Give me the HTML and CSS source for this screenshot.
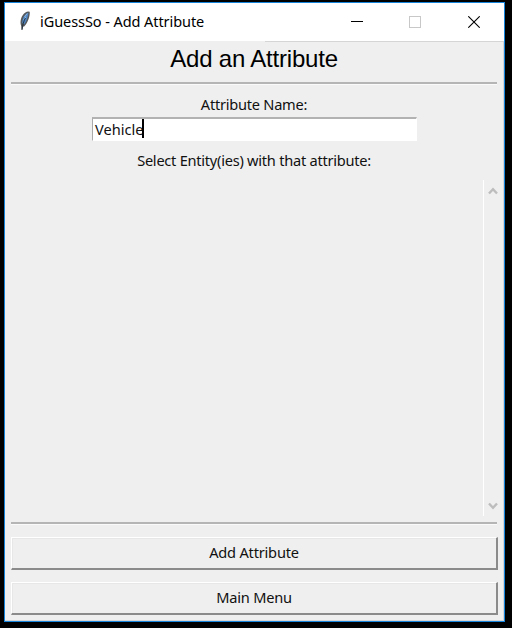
FILE: index.html
```html
<!DOCTYPE html>
<html lang="en">
<head>
<meta charset="utf-8">
<title>iGuessSo - Add Attribute</title>
<link rel="stylesheet" href="styles.css">
</head>
<body>
<main class="window">
  <header class="titlebar">
    <svg class="feather" width="12" height="20" viewBox="0 0 14 20" preserveAspectRatio="none"><path d="M2.500 15C0.500 10 3 4 7.500 1.500Q10 0 12.500 .8C13 5 10.500 12 6 15.500L4.500 15.800L4 19H3Z" fill="#56595c"/><path d="M3.800 12C4 7 6.500 3 11 1.800C10.500 6 9 10 6 13.500Z" fill="#4f87c6"/><path d="M6.500 6L9.500 2.500M5.500 9L8 6" stroke="#92b8df" stroke-width="1"/><path d="M3.500 18.500C4.300 14 5.500 10 7.500 7" fill="none" stroke="#1b2935" stroke-width="1"/></svg>
    <span class="caption">iGuessSo - Add Attribute</span>
    <div class="controls">
      <svg width="12" height="12" viewBox="0 0 12 12"><path d="M0 5.500H12" stroke="#000"/></svg>
      <svg width="12" height="12" viewBox="0 0 12 12"><rect x=".5" y=".5" width="11" height="11" fill="none" stroke="#c8c8c8"/></svg>
      <svg width="12" height="12" viewBox="0 0 12 12"><path d="M.3 .3L11.700 11.700M11.700 .3L.3 11.700" stroke="#000" stroke-width="1.100"/></svg>
    </div>
  </header>
  <section class="content">
    <h1>Add an Attribute</h1>
    <div class="rule"></div>
    <label class="name-label">Attribute Name:</label>
    <div class="entry"><span class="value">Vehicle</span><i class="caret"></i></div>
    <p class="select-label">Select Entity(ies) with that attribute:</p>
    <div class="list">
      <div class="scrollbar">
        <svg width="10" height="8" viewBox="0 0 10 8"><path d="M1 6.500L5 2.200L9 6.500" fill="none" stroke="#bdbdbd" stroke-width="2.400"/></svg>
        <svg width="10" height="8" viewBox="0 0 10 8"><path d="M1 1.500L5 5.800L9 1.500" fill="none" stroke="#bdbdbd" stroke-width="2.400"/></svg>
      </div>
    </div>
    <div class="rule"></div>
    <button class="action"><span>Add Attribute</span></button>
    <button class="action"><span>Main Menu</span></button>
  </section>
</main>
</body>
</html>
```
FILE: styles.css
```css
* { box-sizing: border-box; }
body { margin: 0; padding: 2px 0 0 4px; height: 628px; background: #000; overflow: hidden; color: #111; font: 14.600px/20px "Noto Sans", sans-serif; letter-spacing: -.25px; }
.window { width: 501px; height: 620px; border: 1px solid #1784dc; background: #efefef; display: flex; flex-direction: column; }
.titlebar { height: 38px; flex: none; background: #fff; display: flex; align-items: flex-start; padding-left: 14px; }
.feather { margin-top: 8px; }
.caption { margin: 8px 0 0 9px; font-size: 14.500px; line-height: 21px; color: #000; white-space: nowrap; letter-spacing: -.07px; }
.controls { display: flex; gap: 47px; margin: 13px 24px 0 auto; }
.controls svg { display: block; }
.controls svg:first-child { margin-right: -1px; }
.content { flex: 1; display: flex; flex-direction: column; padding: 0 6px; border-right: 1px solid #d5d5d5; border-bottom: 1px solid #d5d5d5; background: linear-gradient(#d5d5d5, #d5d5d5) 260px 0 / 240px 1px no-repeat; }
h1 { margin: 3px 0 0; height: 38px; font: 24px/29px "Liberation Sans", sans-serif; text-align: center; color: #000; letter-spacing: -.2px; }
.rule { width: 486px; height: 3px; flex: none; border-top: 2px solid #b5b5b5; border-bottom: 1px solid #fafafa; }
.name-label { height: 21px; margin-top: 9px; text-align: center; }
.entry { width: 325px; height: 24px; margin: 2px 0 0 81px; background: #fff; border: 1px solid #aaa; border-right-color: #fff; border-bottom-color: #fff; border-top-width: 2px; border-top-color: #b2b2b2; display: flex; align-items: flex-start; padding-left: 2px; }
.value { letter-spacing: 0; }
.caret { width: 2px; height: 19px; background: #000; margin-left: -1px; }
.select-label { margin: 9px 0 0; text-align: center; letter-spacing: -.25px; }
.list { height: 336px; margin-top: 10px; display: flex; justify-content: flex-end; }
.scrollbar { width: 16px; border-left: 1px solid #fff; margin-right: -2px; padding: 7px 0 6px 4px; display: flex; flex-direction: column; justify-content: space-between; }
.scrollbar svg { display: block; }
.list + .rule { margin-top: 6px; }
.action { width: 487px; height: 33px; flex: none; margin: 12px 0 0; padding: 0 0 2px; border: 2px solid #8b8b8b; border-top: 1px solid #fff; border-left: 1px solid #fff; background: #efefef; box-shadow: inset 1px 1px #e7e7e7; color: #111; font: 14.600px/20px "Noto Sans", sans-serif; letter-spacing: -.2px; }
```
